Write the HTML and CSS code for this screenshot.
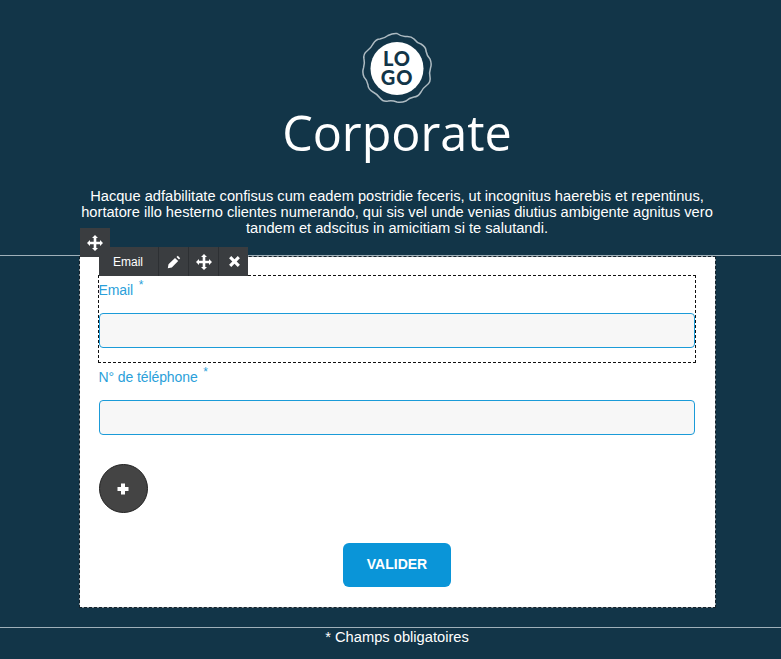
FILE: index.html
```html
<!DOCTYPE html>
<html lang="en">

<head>
    <meta charset="UTF-8">
    <meta name="viewport" content="width=device-width, initial-scale=1.0">
    <title>Corporate</title>
    <link rel="stylesheet" href="styles.css">
</head>

<body>
    <header class="top">
        <svg class="logo" width="72" height="72" viewBox="0 0 72 72">
            <path class="logo-ring" d="M36 1.500 Q41 5 45 4.500 Q50 4 53 7 Q56 11 60 12 Q65 15 65 19 Q66 24 69 27 Q71 32 69.500 36 Q68 41 69 45 Q70 50 66 53 Q62 56 60 60 Q57 65 53 65 Q48 66 45 69 Q40 71 36 70 Q31 68 27 69 Q22 70 19 66 Q16 62 12 60 Q7 57 7 53 Q6 48 3 45 Q1 40 2.500 36 Q4 31 3 27 Q2 22 6 19 Q10 16 12 12 Q15 7 19 7 Q24 6 27 3.500 Q32 1 36 1.500 Z"/>
            <circle class="logo-disc" cx="36" cy="36.500" r="26.500"/>
            <text class="logo-text" x="36" y="34" text-anchor="middle">LO</text>
            <text class="logo-text" x="36" y="53" text-anchor="middle">GO</text>
        </svg>
        <h1 class="title">Corporate</h1>
        <p class="intro">Hacque adfabilitate confisus cum eadem postridie feceris, ut incognitus haerebis et repentinus, hortatore illo hesterno clientes numerando, qui sis vel unde venias diutius ambigente agnitus vero tandem et adscitus in amicitiam si te salutandi.</p>
    </header>

    <main class="band">
        <div class="card">
            <div class="move-handle">
                <svg width="16" height="16" viewBox="0 0 16 16"><path class="glyph" d="M8 0 11 3 9.300 3 9.300 6.700 13 6.700 13 5 16 8 13 11 13 9.300 9.300 9.300 9.300 13 11 13 8 16 5 13 6.700 13 6.700 9.300 3 9.300 3 11 0 8 3 5 3 6.700 6.700 6.700 6.700 3 5 3Z"/></svg>
            </div>

            <div class="field field-selected">
                <div class="toolbar">
                    <span class="tool tool-name">Email</span>
                    <span class="tool">
                        <svg width="14" height="14" viewBox="0 0 14 14"><path class="glyph" d="M10.800 .8 13.200 3.200 12 4.500 9.500 2.100ZM8 2.900 11.200 6 4.800 12.500 .8 13.200 1.500 9.200Z"/></svg>
                    </span>
                    <span class="tool">
                        <svg width="16" height="16" viewBox="0 0 16 16"><path class="glyph" d="M8 0 11 3 9.300 3 9.300 6.700 13 6.700 13 5 16 8 13 11 13 9.300 9.300 9.300 9.300 13 11 13 8 16 5 13 6.700 13 6.700 9.300 3 9.300 3 11 0 8 3 5 3 6.700 6.700 6.700 6.700 3 5 3Z"/></svg>
                    </span>
                    <span class="tool">
                        <svg width="13" height="13" viewBox="0 0 12 12"><path class="glyph" d="M3 1 6 4 9 1 11 3 8 6 11 9 9 11 6 8 3 11 1 9 4 6 1 3Z"/></svg>
                    </span>
                </div>
                <label class="label" for="email">Email <sup class="star">*</sup></label>
                <input class="input" type="text" id="email">
            </div>

            <div class="field">
                <label class="label" for="phone">N° de téléphone <sup class="star">*</sup></label>
                <input class="input" type="text" id="phone">
            </div>

            <button type="button" class="add-button">
                <svg width="14" height="14" viewBox="0 0 14 14"><path class="glyph" d="M5 1.500H9V5H12.500V9H9V12.500H5V9H1.500V5H5Z"/></svg>
            </button>

            <div class="actions">
                <button type="button" class="submit">VALIDER</button>
            </div>
        </div>
    </main>

    <footer class="bottom">
        <p class="note">* Champs obligatoires</p>
    </footer>
</body>

</html>
```

FILE: styles.css
```css
html {
    overflow: hidden;
    background-color: #123548;
}

body {
    margin: 0;
    width: 794px;
    height: 659px;
    background-color: #123548;
    color: #fff;
    font-family: 'Liberation Sans', Arial, sans-serif;
}

.top {
    display: flex;
    flex-direction: column;
    align-items: center;
    padding-top: 32px;
}

.logo {
    display: block;
}

.logo-ring {
    fill: none;
    stroke: #aebbc2;
    stroke-width: 1.500;
}

.logo-disc {
    fill: #fff;
}

.logo-text {
    fill: #123548;
    font-family: Lato, sans-serif;
    font-size: 20px;
    font-weight: 900;
    letter-spacing: 1px;
}

.title {
    margin: -1px 0 0;
    height: 58px;
    font-family: 'Open Sans', sans-serif;
    font-size: 48.500px;
    font-weight: 400;
    line-height: 58px;
}

.intro {
    width: 640px;
    margin: 27px 0 0;
    font-size: 14.650px;
    line-height: 16px;
    text-align: center;
}

.band {
    margin-top: 19px;
    border-top: 1px solid #9fb0b9;
    display: flex;
    justify-content: center;
}

.card {
    position: relative;
    box-sizing: border-box;
    width: 637px;
    height: 352px;
    padding: 18px 19px 0;
    background: #fff;
    background-clip: padding-box;
    border: 1px solid #8f9aa0;
    outline: 1px dashed #14222b;
    outline-offset: -1px;
}

.move-handle {
    position: absolute;
    left: 0;
    top: -29px;
    width: 30px;
    height: 29px;
    background: #3a3d40;
    display: flex;
    align-items: center;
    justify-content: center;
}

.glyph {
    fill: #fff;
}

.field {
    position: relative;
    height: 86px;
}

.field-selected {
    box-sizing: border-box;
    height: 88px;
    margin: 0 0 0 -1px;
    border: 1px dashed #111;
    width: 598px;
    padding: 0;
}

.toolbar {
    position: absolute;
    left: 0;
    top: -29px;
    height: 29px;
    display: flex;
    background: #3a3d40;
}

.tool {
    box-sizing: border-box;
    width: 30px;
    padding-left: 2px;
    display: flex;
    align-items: center;
    justify-content: center;
    border-left: 1px solid #2d3033;
}

.tool-name {
    width: 59px;
    padding-left: 0;
    border-left: 0;
    color: #fff;
    font-size: 12px;
}

.label {
    display: block;
    box-sizing: border-box;
    color: #2b9fda;
    font-size: 14px;
    letter-spacing: -0.1px;
    line-height: 16px;
}

.star {
    font-size: 12px;
    line-height: 0;
    vertical-align: 6px;
    margin-left: 2px;
}

.input {
    display: block;
    box-sizing: border-box;
    width: 596px;
    height: 35px;
    padding: 0 10px;
    background: #f7f7f7;
    border: 1px solid #1b9bd8;
    border-radius: 4px;
}

.field-selected .label {
    padding-top: 6px;
    height: 37px;
}

.field-selected + .field .label {
    height: 37px;
    padding-top: 6px;
}

.add-button {
    display: flex;
    align-items: center;
    justify-content: center;
    box-sizing: border-box;
    width: 49px;
    height: 49px;
    margin-top: 15px;
    padding: 0;
    background: #444;
    border: 1px solid #222;
    border-radius: 50%;
}

.actions {
    display: flex;
    justify-content: center;
    margin-top: 30px;
}

.submit {
    width: 108px;
    height: 44px;
    padding: 0 0 3px;
    background: #0a95d8;
    color: #fff;
    border: none;
    border-radius: 6px;
    font-family: 'Liberation Sans', Arial, sans-serif;
    font-size: 14px;
    font-weight: 700;
}

.bottom {
    margin-top: 19px;
    border-top: 1px solid #9fb0b9;
}

.note {
    margin: 1px 0 0;
    font-size: 14.700px;
    line-height: 16px;
    text-align: center;
}
```
